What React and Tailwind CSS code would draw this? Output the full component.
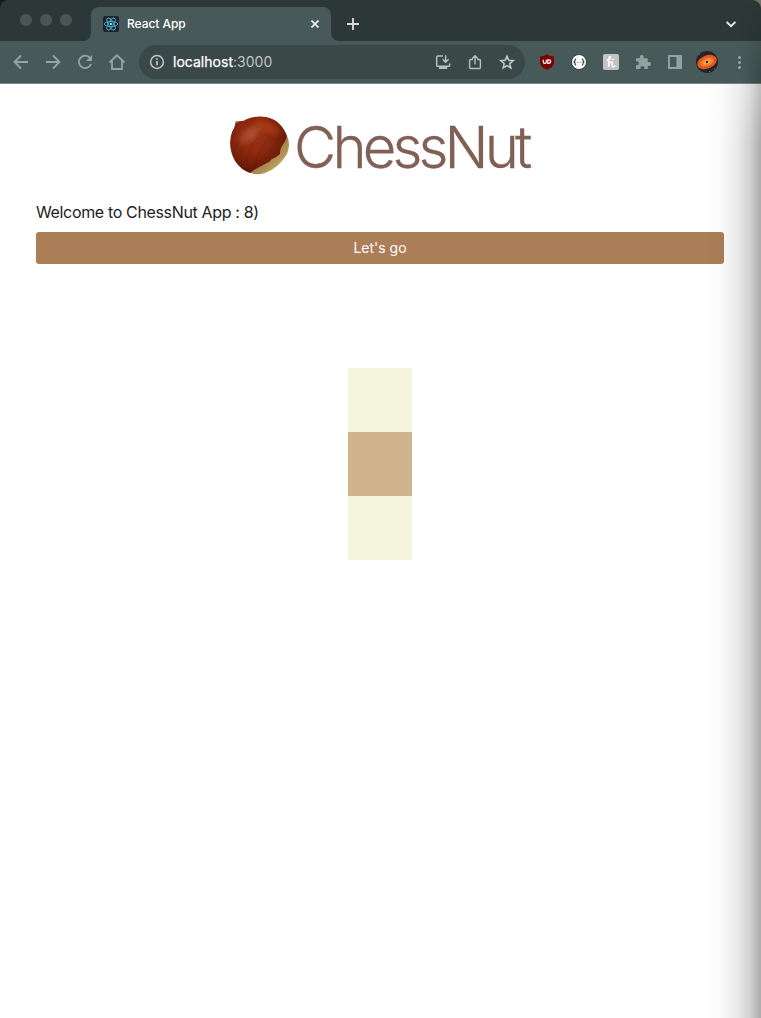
import React from "react";

function ReactIcon() {
  return (
    <svg viewBox="0 0 16 16" className="h-4 w-4 shrink-0">
      <rect width="16" height="16" rx="2" fill="#20232a" />
      <g fill="none" stroke="#4aaccb" strokeWidth="0.9">
        <ellipse cx="8" cy="8" rx="6.7" ry="2.6" />
        <ellipse cx="8" cy="8" rx="6.7" ry="2.6" transform="rotate(60 8 8)" />
        <ellipse cx="8" cy="8" rx="6.7" ry="2.6" transform="rotate(120 8 8)" />
      </g>
      <circle cx="8" cy="8" r="1.3" fill="#61dafb" />
    </svg>
  );
}

function Cell({ children }) {
  return (
    <div className="flex h-8 w-8 shrink-0 items-center justify-center">
      <svg viewBox="0 0 24 24" className="h-6 w-6" fill="none">
        {children}
      </svg>
    </div>
  );
}

function TabStrip() {
  return (
    <div className="flex h-[41px] bg-[#475a59]">
      <div className="flex w-[91px] gap-2 rounded-br-[8px] bg-[#2c3838] pt-[14px] pl-5">
        <span className="h-3 w-3 rounded-full bg-[#4a5655]" />
        <span className="h-3 w-3 rounded-full bg-[#4a5655]" />
        <span className="h-3 w-3 rounded-full bg-[#4a5655]" />
      </div>
      <div className="w-[240px] bg-[#2c3838] bg-[linear-gradient(#2c3838_20px,#475a59_20px)] pt-[7px]">
        <div className="flex h-[34px] items-center rounded-t-[8px] bg-[#475a59] pr-3 pl-3">
          <ReactIcon />
          <span className="ml-2 text-[12px] font-medium tracking-[-0.05px] whitespace-nowrap text-white">React App</span>
          <svg viewBox="0 0 8 8" className="ml-auto h-2 w-2" stroke="#f2f5f5" strokeWidth="1.6">
            <path d="M.5.5l7 7M7.5.5l-7 7" />
          </svg>
        </div>
      </div>
      <div className="flex flex-1 items-center justify-between rounded-bl-[8px] bg-[#2c3838] pt-[7px] pr-[25px] pl-4">
        <svg viewBox="0 0 12 12" className="h-3 w-3" stroke="#d4dad9" strokeWidth="1.9">
          <path d="M6 0v12M0 6h12" />
        </svg>
        <svg viewBox="0 0 10 10" className="h-[10px] w-[10px]" fill="none" stroke="#f2f5f5" strokeWidth="1.8">
          <path d="M.6 2.8L5 7.2l4.4-4.4" />
        </svg>
      </div>
    </div>
  );
}

function Toolbar() {
  return (
    <div className="flex h-[43px] items-center border-b border-[#758583] bg-[#475a59] pl-[5px]">
      <Cell>
        <path d="M19 12H5.8M12 5.5L5.5 12l6.5 6.5" stroke="#97a4a2" strokeWidth="1.8" />
      </Cell>
      <Cell>
        <path d="M5 12h13.2M12 5.5l6.5 6.5-6.5 6.5" stroke="#97a4a2" strokeWidth="1.8" />
      </Cell>
      <Cell>
        <path d="M18 14a6.2 6.2 0 1 1-1-6l1.3 1.5" stroke="#97a4a2" strokeWidth="1.8" />
        <path d="M19 5v6h-6z" fill="#97a4a2" />
      </Cell>
      <Cell>
        <path d="M4.5 12.5L12 5.3l7.5 7.2M7 10.8V19h10v-8.2" stroke="#97a4a2" strokeWidth="1.8" />
      </Cell>
      <div className="ml-[6px] flex h-[34px] w-[386px] items-center rounded-full bg-[#3b4848] pr-[2px] pl-[2px]">
        <Cell>
          <circle cx="12" cy="12" r="6.4" stroke="#c0c8c8" strokeWidth="1.5" />
          <path d="M12 11v4.3M12 8.2v1.6" stroke="#c0c8c8" strokeWidth="1.7" />
        </Cell>
        <span className="pb-px text-[14px] tracking-[0.02px] whitespace-nowrap text-[#bec5c4]">
          <span className="text-white [-webkit-text-stroke:0.25px_white]">localhost</span>:3000
        </span>
        <div className="ml-auto flex">
          <Cell>
            <path d="M12 5.9H6.8q-1.1 0-1.1 1.1v8.2q0 1.1 1.1 1.1h10.8q1.1 0 1.1-1.1v-1.7M14.6 5.3v6.7M11.6 9.3l3 3 3-3" stroke="#b8bfbf" strokeWidth="1.5" />
            <path d="M8 16h8.2v3H8z" fill="#b8bfbf" />
          </Cell>
          <Cell>
            <path d="M10 9.5H7.6q-1 0-1 1v7q0 1 1 1h8.8q1 0 1-1v-7q0-1-1-1H14M12 14.5V6.2M9.3 8.5L12 5.8l2.7 2.7" stroke="#b8bfbf" strokeWidth="1.4" />
          </Cell>
          <Cell>
            <path d="M12 6.2l1.75 4.1 4.45.4-3.4 2.9 1.05 4.4L12 15.65 8.15 18l1.05-4.4-3.4-2.9 4.45-.4z" stroke="#c3caca" strokeWidth="1.5" />
          </Cell>
        </div>
      </div>
      <div className="ml-[6px] flex">
        <Cell>
          <path d="M12 4.3q3 2.2 7 2.2V12q0 5.3-7 7.7Q5 17.3 5 12V6.5Q9 6.5 12 4.3z" fill="#800000" />
          <path d="M8.3 9.7v2.1q0 1.6 1.5 1.6t1.5-1.6V9.7" stroke="#fff" strokeWidth="1.2" />
          <path d="M12.8 9.9v3.4h1.1q1.8 0 1.8-1.7t-1.8-1.7z" stroke="#fff" strokeWidth="1.2" />
        </Cell>
        <Cell>
          <circle cx="12" cy="12" r="7.5" fill="#fff" stroke="#293332" strokeWidth="0.9" />
          <path d="M9.2 8.7q-1.2 0-1.2 1.5v.8L7 12l1 1v.8q0 1.5 1.2 1.5M14.8 8.7q1.2 0 1.2 1.5v.8l1 1-1 1v.8q0 1.5-1.2 1.5" stroke="#333" strokeWidth="1.1" />
          <path d="M9.8 12.3h4.5" stroke="#777" strokeWidth="0.9" strokeDasharray="1 .7" />
        </Cell>
        <Cell>
          <rect x="4" y="4" width="16" height="16" rx="1.8" fill="#c3c3c3" />
          <path d="M8 10.3Q11.4 9 11.5 7.3q-.2-1.5-1.3 0-.7 2-.7 9.7.8-5 2.9-5 1.3 0 .9 2.3-.5 2.7.8 2.6 1.3-.2 2-1.7" stroke="#fff" strokeWidth="1.4" />
          <path d="M12.5 9.4q1.5.7 2.8-.6" stroke="#fff" strokeWidth="1" />
        </Cell>
        <Cell>
          <path d="M5 8.2h3.8V7a2 2 0 0 1 4 0v1.2h3.9V12H18a2 2 0 0 1 0 4h-1.3v3h-3.3v-1.1a2 2 0 0 0-4 0V19H5v-3.7h1a2 2 0 0 0 0-4H5z" fill="#94a19f" />
        </Cell>
        <Cell>
          <path d="M5 5h14v14H5zM7 7v10h6.4V7z" fill="#94a19f" fillRule="evenodd" />
        </Cell>
        <Cell>
          <circle cx="12" cy="12" r="11" fill="#24252a" />
          <g transform="rotate(-22 12 12)">
            <ellipse cx="12" cy="12" rx="10.2" ry="6.6" fill="#e75525" />
            <ellipse cx="12" cy="12" rx="7.5" ry="4.5" fill="#f07e2e" stroke="#d04e22" strokeWidth="0.5" />
            <ellipse cx="12" cy="12" rx="5" ry="2.8" fill="#faa13a" stroke="#e66424" strokeWidth="0.6" />
            <circle cx="12" cy="12" r="1.2" fill="#22201e" />
          </g>
          <path d="M4 4.2h1M19 19h1M14 21.5h1" stroke="#88898b" strokeWidth="0.8" />
        </Cell>
        <Cell>
          <g fill="#97a4a2">
            <circle cx="12.5" cy="7.4" r="1.5" />
            <circle cx="12.5" cy="12.4" r="1.5" />
            <circle cx="12.5" cy="17.4" r="1.5" />
          </g>
        </Cell>
      </div>
    </div>
  );
}

function Chestnut() {
  return (
    <svg viewBox="0 0 60 60" className="h-[60px] w-[60px] shrink-0">
      <defs>
        <radialGradient id="shell" cx="0.4" cy="0.34" r="0.72">
          <stop offset="0" stopColor="#9c3519" />
          <stop offset="0.35" stopColor="#8d2a10" />
          <stop offset="0.7" stopColor="#701c07" />
          <stop offset="1" stopColor="#450b0a" />
        </radialGradient>
        <linearGradient id="husk" x1="0" y1="0" x2="1" y2="1">
          <stop offset="0.4" stopColor="#967540" />
          <stop offset="0.65" stopColor="#b09258" />
          <stop offset="1" stopColor="#eed28a" />
        </linearGradient>
        <filter id="soft" x="-30%" y="-30%" width="160%" height="160%">
          <feGaussianBlur stdDeviation="3" />
        </filter>
        <clipPath id="nut">
          <path d="M5.5 7Q4.7 5.3 8 5.3Q14 5.5 17 3Q26-.5 36 1Q51 4 57 20Q56 25 52 30Q50 33 50 38Q47 41 42 43Q39 47 35 48Q29 51 24 54L20 57Q11 54 5 45Q-3 30 2 16Q5 11 5.5 7z" />
        </clipPath>
      </defs>
      <path d="M57 20Q61 28 57 38Q49 52 35 57Q26 60 19 56L22 50L50 28z" fill="url(#husk)" />
      <g clipPath="url(#nut)">
        <rect width="60" height="60" fill="url(#shell)" />
        <g fill="none" stroke="#551307" opacity="0.2" strokeWidth="0.8">
          <path d="M4 38Q9 18 20 8M9 44Q14 20 30 5M16 49Q20 27 38 7M24 53Q27 34 46 12M32 51Q40 34 51 20" />
        </g>
        <ellipse cx="20" cy="18" rx="13" ry="5" transform="rotate(-40 20 18)" fill="#c97560" opacity="0.45" filter="url(#soft)" />
        <ellipse cx="38" cy="11" rx="13" ry="5" transform="rotate(25 38 11)" fill="#d1501c" opacity="0.45" filter="url(#soft)" />
      </g>
      <path d="M5.2 7Q4.8 5.8 9 5.8" fill="none" stroke="#c98038" strokeWidth="1" />
    </svg>
  );
}

export default function App() {
  return (
    <div className="relative flex h-[1018px] w-[761px] flex-col overflow-hidden bg-white font-['Inter',sans-serif]">
      <TabStrip />
      <Toolbar />
      <main className="flex flex-1 flex-col px-9 pt-[31px] text-[#222]">
        <h1 className="flex h-[62px] items-center pl-[194px]">
          <Chestnut />
          <span className="mt-[2px] ml-[4px] text-[58px] leading-[62px] font-light tracking-[-3.85px] whitespace-nowrap text-[#805f55] [-webkit-text-stroke:0.3px_#805f55]">ChessNut</span>
        </h1>
        <p className="mt-[23px] text-[16px] leading-[24px] tracking-[-0.35px] whitespace-nowrap">Welcome to ChessNut App : 8)</p>
        <button className="mt-2 mr-[1px] h-8 rounded-[3px] bg-[#ac7e58] pb-[2px] text-[14px] text-white">Let's go</button>
        <div className="mt-[104px] flex flex-col pl-[312px]">
          <div className="h-16 w-16 bg-[#f5f5dc]" />
          <div className="h-16 w-16 bg-[#d1b38c]" />
          <div className="h-16 w-16 bg-[#f5f5dc]" />
        </div>
      </main>
      <div className="pointer-events-none absolute right-0 bottom-0 top-[84px] w-14 bg-[linear-gradient(to_right,transparent,rgba(0,0,0,0.02)_30%,rgba(0,0,0,0.08)_57%,rgba(0,0,0,0.18)_80%,rgba(0,0,0,0.33))] [mask-image:linear-gradient(rgba(0,0,0,0.75),black_60px)]" />
      <div className="pointer-events-none absolute top-0 right-0 h-[84px] w-5 bg-linear-to-r from-transparent to-black/20 [mask-image:linear-gradient(transparent,black)]" />
      <svg viewBox="0 0 761 10" className="pointer-events-none absolute top-0 left-0 h-[10px] w-[761px]">
        <path d="M0 0h9Q0 0 0 9z" fill="#171a16" />
        <path d="M761 0h-8q7 1 8 8z" fill="#756e66" />
      </svg>
    </div>
  );
}
